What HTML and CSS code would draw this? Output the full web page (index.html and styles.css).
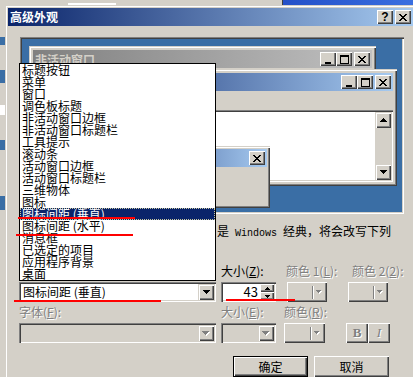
FILE: index.html
```html
<!DOCTYPE html>
<html lang="zh-CN">
<head>
    <meta charset="UTF-8">
    <title>高级外观</title>
    <link rel="stylesheet" href="styles.css">
</head>
<body>
    <!-- окна за диалогом -->
    <div class="behind behind-left"></div>
    <div class="behind behind-top"></div>
    <div class="behind behind-edit"></div>

    <div class="dialog">
        <div class="titlebar">
            <span class="title">高级外观</span>
            <div class="cap-btns">
                <span class="cap-btn help">?</span>
                <span class="cap-btn">
                    <svg width="8" height="7" viewBox="0 0 8 7"><path d="M0 0h2v1H0zM6 0h2v1H6zM1 1h2v1H1zM5 1h2v1H5zM2 2h4v1H2zM3 3h2v1H3zM2 4h4v1H2zM1 5h2v1H1zM5 5h2v1H5zM0 6h2v1H0zM6 6h2v1H6z"/></svg>
                </span>
            </div>
        </div>

        <div class="dialog-body">
            <div class="preview">
                <div class="win win-inactive">
                    <div class="win-title inactive">
                        <span>非活动窗口</span>
                        <div class="cap-btns">
                            <div class="cap-pair">
                                <span class="cap-btn"><svg width="8" height="9" viewBox="0 0 8 9"><path d="M1 7h6v2H1z"/></svg></span>
                                <span class="cap-btn"><svg width="9" height="9" viewBox="0 0 9 9"><path d="M0 0h9v2H0zM0 2h1v6H0zM8 2h1v6H8zM0 8h9v1H0z"/></svg></span>
                            </div>
                            <span class="cap-btn"><svg width="8" height="7" viewBox="0 0 8 7"><path d="M0 0h2v1H0zM6 0h2v1H6zM1 1h2v1H1zM5 1h2v1H5zM2 2h4v1H2zM3 3h2v1H3zM2 4h4v1H2zM1 5h2v1H1zM5 5h2v1H5zM0 6h2v1H0zM6 6h2v1H6z"/></svg></span>
                        </div>
                    </div>
                </div>

                <!-- левая часть окон закрыта списком -->
                <div class="win win-active">
                    <div class="win-title">
                        <span></span>
                        <div class="cap-btns">
                            <div class="cap-pair">
                                <span class="cap-btn"><svg width="8" height="9" viewBox="0 0 8 9"><path d="M1 7h6v2H1z"/></svg></span>
                                <span class="cap-btn"><svg width="9" height="9" viewBox="0 0 9 9"><path d="M0 0h9v2H0zM0 2h1v6H0zM8 2h1v6H8zM0 8h9v1H0z"/></svg></span>
                            </div>
                            <span class="cap-btn"><svg width="8" height="7" viewBox="0 0 8 7"><path d="M0 0h2v1H0zM6 0h2v1H6zM1 1h2v1H1zM5 1h2v1H5zM2 2h4v1H2zM3 3h2v1H3zM2 4h4v1H2zM1 5h2v1H1zM5 5h2v1H5zM0 6h2v1H0zM6 6h2v1H6z"/></svg></span>
                        </div>
                    </div>
                    <div class="menubar"></div>
                    <div class="client">
                        <div class="client-text"></div>
                        <div class="scrollbar">
                            <span class="scroll-btn"><svg width="7" height="4" viewBox="0 0 7 4"><path d="M3 0h1v1H3zM2 1h3v1H2zM1 2h5v1H1zM0 3h7v1H0z"/></svg></span>
                            <span class="scroll-track"></span>
                            <span class="scroll-btn"><svg width="7" height="4" viewBox="0 0 7 4"><path d="M0 0h7v1H0zM1 1h5v1H1zM2 2h3v1H2zM3 3h1v1H3z"/></svg></span>
                        </div>
                    </div>
                </div>

                <div class="win win-msg">
                    <div class="win-title">
                        <span></span>
                        <span class="cap-btn"><svg width="8" height="7" viewBox="0 0 8 7"><path d="M0 0h2v1H0zM6 0h2v1H6zM1 1h2v1H1zM5 1h2v1H5zM2 2h4v1H2zM3 3h2v1H3zM2 4h4v1H2zM1 5h2v1H1zM5 5h2v1H5zM0 6h2v1H0zM6 6h2v1H6z"/></svg></span>
                    </div>
                </div>
            </div>

            <p class="note">是<span class="mono"> Windows </span>经典，将会改写下列</p>

            <div class="field-row">
                <div class="field f-item">
                    <label></label>
                    <div class="combo">
                        <span class="combo-text">图标间距 (垂直)</span>
                        <span class="drop-btn"><svg width="7" height="4" viewBox="0 0 7 4"><path d="M0 0h7v1H0zM1 1h5v1H1zM2 2h3v1H2zM3 3h1v1H3z"/></svg></span>
                    </div>
                </div>
                <div class="field f-size">
                    <label>大小(<u>Z</u>):</label>
                    <div class="spin">
                        <span class="spin-val">43</span>
                        <div class="spin-btns">
                            <span class="spin-btn"><svg width="5" height="3" viewBox="0 0 5 3"><path d="M2 0h1v1H2zM1 1h3v1H1zM0 2h5v1H0z"/></svg></span>
                            <span class="spin-btn"><svg width="5" height="3" viewBox="0 0 5 3"><path d="M0 0h5v1H0zM1 1h3v1H1zM2 2h1v1H2z"/></svg></span>
                        </div>
                    </div>
                </div>
                <div class="field f-color1">
                    <label class="off">颜色 1(<u>L</u>):</label>
                    <div class="color-btn">
                        <span class="swatch"></span>
                        <span class="sep"></span>
                        <svg class="off-arrow" width="6" height="5" viewBox="0 0 6 5"><path fill="#fff" d="M1 1h5v1H1zM2 2h3v1H2zM3 3h1v1H3z"/><path fill="#808080" d="M0 0h5v1H0zM1 1h3v1H1zM2 2h1v1H2z"/></svg>
                    </div>
                </div>
                <div class="field f-color2">
                    <label class="off">颜色 2(<u>2</u>):</label>
                    <div class="color-btn">
                        <span class="swatch"></span>
                        <span class="sep"></span>
                        <svg class="off-arrow" width="6" height="5" viewBox="0 0 6 5"><path fill="#fff" d="M1 1h5v1H1zM2 2h3v1H2zM3 3h1v1H3z"/><path fill="#808080" d="M0 0h5v1H0zM1 1h3v1H1zM2 2h1v1H2z"/></svg>
                    </div>
                </div>
            </div>

            <div class="field-row second">
                <div class="field f-font">
                    <label class="off">字体(<u>F</u>):</label>
                    <div class="combo disabled">
                        <span class="combo-text"></span>
                        <span class="drop-btn"><svg width="8" height="5" viewBox="0 0 8 5"><path fill="#fff" d="M1 1h7v1H1zM2 2h5v1H2zM3 3h3v1H3zM4 4h1v1H4z"/><path fill="#808080" d="M0 0h7v1H0zM1 1h5v1H1zM2 2h3v1H2zM3 3h1v1H3z"/></svg></span>
                    </div>
                </div>
                <div class="field f-size2">
                    <label class="off">大小(<u>E</u>):</label>
                    <div class="combo disabled">
                        <span class="combo-text"></span>
                        <span class="drop-btn"><svg width="8" height="5" viewBox="0 0 8 5"><path fill="#fff" d="M1 1h7v1H1zM2 2h5v1H2zM3 3h3v1H3zM4 4h1v1H4z"/><path fill="#808080" d="M0 0h7v1H0zM1 1h5v1H1zM2 2h3v1H2zM3 3h1v1H3z"/></svg></span>
                    </div>
                </div>
                <div class="field f-color">
                    <label class="off">颜色(<u>R</u>):</label>
                    <div class="color-btn">
                        <span class="swatch"></span>
                        <span class="sep"></span>
                        <svg class="off-arrow" width="6" height="5" viewBox="0 0 6 5"><path fill="#fff" d="M1 1h5v1H1zM2 2h3v1H2zM3 3h1v1H3z"/><path fill="#808080" d="M0 0h5v1H0zM1 1h3v1H1zM2 2h1v1H2z"/></svg>
                    </div>
                </div>
                <div class="style-btns">
                    <span class="style-btn bold">B</span>
                    <span class="style-btn italic">I</span>
                </div>
            </div>

            <div class="actions">
                <span class="push-btn default">确定</span>
                <span class="push-btn">取消</span>
            </div>
        </div>
    </div>

    <!-- открытый список комбобокса -->
    <ul class="droplist">
        <li>标题按钮</li>
        <li>菜单</li>
        <li>窗口</li>
        <li>调色板标题</li>
        <li>非活动窗口边框</li>
        <li>非活动窗口标题栏</li>
        <li>工具提示</li>
        <li>滚动条</li>
        <li>活动窗口边框</li>
        <li>活动窗口标题栏</li>
        <li>三维物体</li>
        <li>图标</li>
        <li class="selected">图标间距 (垂直)</li>
        <li>图标间距 (水平)</li>
        <li>消息框</li>
        <li>已选定的项目</li>
        <li>应用程序背景</li>
        <li>桌面</li>
    </ul>

    <!-- красные пометки -->
    <div class="mark mark-1"></div>
    <div class="mark mark-2"></div>
    <div class="mark mark-3"></div>
    <div class="mark mark-4"></div>
</body>
</html>
```

FILE: styles.css
```css
* {
    margin: 0;
    padding: 0;
    box-sizing: border-box;
}

body {
    width: 413px;
    height: 377px;
    overflow: hidden;
    position: relative;
    background-color: #d4d0c8;
    font-family: "Noto Sans CJK SC", sans-serif;
    font-size: 12px;
    color: #000;
}

svg {
    display: block;
    shape-rendering: crispEdges;
}

/* фон за диалогом */
.behind {
    position: absolute;
}

.behind-left {
    left: 0;
    top: 0;
    width: 5px;
    height: 377px;
    background: linear-gradient(to bottom,
        #d4d0c8 0, #d4d0c8 37px, #3a6ea5 37px, #3a6ea5 45px,
        #d4d0c8 45px, #d4d0c8 70px, #3a6ea5 70px, #3a6ea5 83px,
        #d4d0c8 83px, #d4d0c8 105px, #fff 105px, #fff 115px,
        #d4d0c8 115px, #d4d0c8 140px, #3a6ea5 140px, #3a6ea5 150px,
        #d4d0c8 150px, #d4d0c8 196px, #3a6ea5 196px, #3a6ea5 210px,
        #d4d0c8 210px);
}

.behind-top {
    left: 282px;
    top: 0;
    width: 131px;
    height: 5px;
    background: linear-gradient(to right, #2450c8, #3a6fe0);
    border-left: 1px solid #404040;
}

.behind-edit {
    left: 68px;
    top: 3px;
    width: 48px;
    height: 2px;
    background-color: #fff;
}

/* диалог */
.dialog {
    position: absolute;
    left: 5px;
    top: 5px;
    width: 411px;
    height: 380px;
    padding: 3px;
    background-color: #d4d0c8;
    box-shadow: inset 1px 1px #d4d0c8, inset 2px 2px #fff, inset -1px -1px #404040, inset -2px -2px #808080;
}

.titlebar {
    height: 18px;
    display: flex;
    align-items: center;
    justify-content: space-between;
    padding: 0 2px;
    background: linear-gradient(to right, #0a246a, #a6caf0);
}

.title {
    color: #fff;
    font-weight: bold;
    font-size: 12px;
    line-height: 18px;
}

.cap-btns {
    display: flex;
    gap: 2px;
}

.cap-pair {
    display: flex;
}

.cap-btn {
    width: 16px;
    height: 14px;
    display: flex;
    align-items: center;
    justify-content: center;
    background-color: #d4d0c8;
    box-shadow: inset 1px 1px #fff, inset -1px -1px #404040, inset -2px -2px #808080;
}

.cap-btn.help {
    font-family: "Liberation Sans", sans-serif;
    font-weight: bold;
    font-size: 12px;
    line-height: 14px;
}

.dialog-body {
    padding: 11px 0 0 11px;
}

/* превью */
.preview {
    position: relative;
    margin-left: 1px;
    width: 384px;
    height: 177px;
    background-color: #3a6ea5;
    box-shadow: inset 1px 1px #808080, inset 2px 2px #404040, inset -1px -1px #fff, inset -2px -2px #d4d0c8;
}

.win {
    position: absolute;
    padding: 4px;
    background-color: #d4d0c8;
    box-shadow: inset 1px 1px #d4d0c8, inset 2px 2px #fff, inset -1px -1px #404040, inset -2px -2px #808080;
}

.win-inactive {
    left: 9px;
    top: 9px;
    width: 347px;
    height: 110px;
}

.win-active {
    left: 19px;
    top: 32px;
    width: 358px;
    height: 117px;
    display: flex;
    flex-direction: column;
}

.win-msg {
    left: 39px;
    top: 109px;
    width: 211px;
    height: 62px;
    padding: 3px;
}

.win-title {
    height: 18px;
    display: flex;
    align-items: center;
    justify-content: space-between;
    padding: 0 2px;
    color: #fff;
    font-weight: bold;
    background: linear-gradient(to right, #0a246a, #a6caf0);
}

.win-title.inactive {
    color: #d4d0c8;
    background: linear-gradient(to right, #808080, #c0c0c0);
}

.menubar {
    height: 19px;
}

.client {
    flex: 1;
    display: flex;
    padding: 2px;
    background-color: #fff;
    box-shadow: inset 1px 1px #808080, inset 2px 2px #404040, inset -1px -1px #fff, inset -2px -2px #d4d0c8;
}

.client-text {
    flex: 1;
}

.scrollbar {
    width: 16px;
    display: flex;
    flex-direction: column;
}

.scroll-btn {
    height: 16px;
    display: flex;
    align-items: center;
    justify-content: center;
    background-color: #d4d0c8;
    box-shadow: inset 1px 1px #d4d0c8, inset 2px 2px #fff, inset -1px -1px #404040, inset -2px -2px #808080;
}

.scroll-track {
    flex: 1;
    background-color: #d4d0c8;
}

/* текст и поля */
.note {
    margin-top: 10px;
    height: 28px;
    line-height: 14px;
    padding-left: 198px;
    white-space: nowrap;
}

.mono {
    font-family: "Liberation Mono", monospace;
    font-size: 10px;
}

.field-row {
    display: flex;
    align-items: flex-end;
    margin-top: 12px;
}

.field-row.second {
    margin-top: 3px;
}

.field {
    display: flex;
    flex-direction: column;
    gap: 4px;
}

.field label {
    line-height: 14px;
    height: 14px;
    white-space: nowrap;
}

label.off {
    color: #808080;
    text-shadow: 1px 1px #fff;
}

.f-item,
.f-font {
    width: 197px;
}

.f-size,
.f-size2 {
    width: 55px;
    margin-left: 5px;
}

.f-color1 {
    width: 40px;
    margin-left: 11px;
}

.f-color1 label {
    margin-left: -1px;
}

.f-color2 {
    width: 40px;
    margin-left: 21px;
}

.f-color2 label {
    margin-left: 4px;
}

.f-color {
    width: 41px;
    margin-left: 8px;
}

.combo {
    height: 20px;
    display: flex;
    align-items: center;
    padding: 2px;
    background-color: #fff;
    box-shadow: inset 1px 1px #808080, inset 2px 2px #404040, inset -1px -1px #fff, inset -2px -2px #d4d0c8;
}

.combo.disabled {
    background-color: #d4d0c8;
}

.combo-text {
    flex: 1;
    padding-left: 2px;
    white-space: nowrap;
    line-height: 16px;
}

.drop-btn {
    width: 16px;
    height: 16px;
    display: flex;
    align-items: center;
    justify-content: center;
    background-color: #d4d0c8;
    box-shadow: inset 1px 1px #d4d0c8, inset 2px 2px #fff, inset -1px -1px #404040, inset -2px -2px #808080;
}

.spin {
    height: 20px;
    display: flex;
    padding: 2px;
    background-color: #fff;
    box-shadow: inset 1px 1px #808080, inset 2px 2px #404040, inset -1px -1px #fff, inset -2px -2px #d4d0c8;
}

.spin-val {
    flex: 1;
    text-align: right;
    padding-right: 2px;
    line-height: 16px;
    font-size: 13px;
}

.spin-btns {
    width: 14px;
    display: flex;
    flex-direction: column;
}

.spin-btn {
    height: 8px;
    display: flex;
    align-items: center;
    justify-content: center;
    background-color: #d4d0c8;
    box-shadow: inset 1px 1px #fff, inset -1px -1px #404040, inset -2px -2px #808080;
}

.color-btn {
    height: 20px;
    display: flex;
    align-items: center;
    padding: 3px;
    background-color: #d4d0c8;
    box-shadow: inset 1px 1px #fff, inset -1px -1px #404040, inset -2px -2px #808080;
}

.swatch {
    flex: 1;
}

.sep {
    width: 2px;
    height: 13px;
    border-left: 1px solid #808080;
    border-right: 1px solid #fff;
    margin-right: 2px;
}

.off-arrow {
    margin-right: 2px;
}

.style-btns {
    display: flex;
    margin-left: 21px;
}

.style-btn {
    width: 22px;
    height: 20px;
    display: flex;
    align-items: center;
    justify-content: center;
    background-color: #d4d0c8;
    color: #808080;
    text-shadow: 1px 1px #fff;
    box-shadow: inset 1px 1px #fff, inset -1px -1px #404040, inset -2px -2px #808080;
    font-family: "Liberation Serif", serif;
    font-size: 13px;
}

.style-btn.bold {
    font-weight: bold;
}

.style-btn.italic {
    font-style: italic;
}

.actions {
    display: flex;
    gap: 6px;
    margin-top: 13px;
    padding-left: 214px;
}

.push-btn {
    width: 75px;
    height: 21px;
    display: flex;
    align-items: center;
    justify-content: center;
    background-color: #d4d0c8;
    box-shadow: inset 1px 1px #fff, inset -1px -1px #404040, inset -2px -2px #808080;
}

.push-btn.default {
    box-shadow: inset 1px 1px #000, inset -1px -1px #000, inset 2px 2px #fff, inset -2px -2px #404040, inset -3px -3px #808080;
}

/* открытый список */
.droplist {
    position: absolute;
    left: 19px;
    top: 63px;
    width: 197px;
    list-style: none;
    border: 1px solid #000;
    background-color: #fff;
}

.droplist li {
    height: 12px;
    line-height: 12px;
    padding-left: 2px;
    white-space: nowrap;
}

.droplist li.selected {
    background-color: #0a246a;
    color: #fff;
    outline: 1px dotted #c8c8a0;
    outline-offset: -1px;
}

/* пометки */
.mark {
    position: absolute;
    height: 2px;
    background-color: #f00;
}

.mark-1 {
    left: 18px;
    top: 217px;
    width: 117px;
}

.mark-2 {
    left: 16px;
    top: 234px;
    width: 117px;
}

.mark-3 {
    left: 14px;
    top: 300px;
    width: 147px;
}

.mark-4 {
    left: 226px;
    top: 299px;
    width: 69px;
}
```
